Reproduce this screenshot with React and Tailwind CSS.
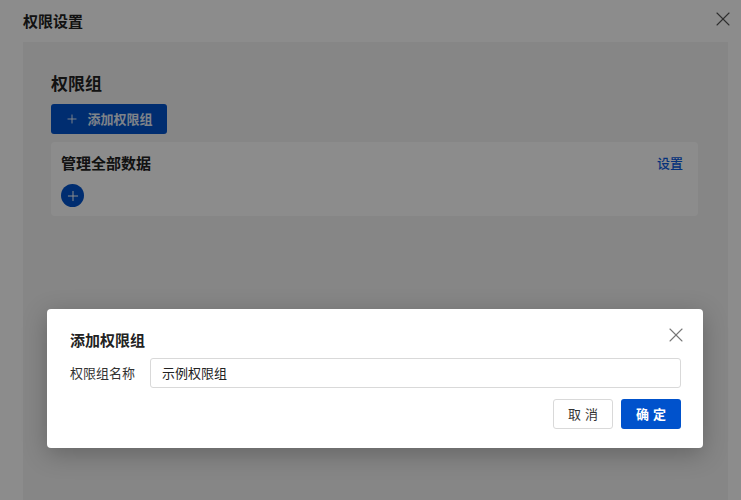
import { Plus, X } from "lucide-react";

const font = { fontFamily: '"Noto Sans CJK SC", "Noto Sans", sans-serif' };

export default function App() {
  return (
    <div style={font} className="relative w-[741px] h-[500px] overflow-hidden bg-white text-[#222]">
      {/* Page header */}
      <div className="h-[42px] flex items-center justify-between pl-[23px] pr-[6px]">
        <h1 className="text-[15px] font-bold leading-none -mt-[2px]">权限设置</h1>
        <X size={24} strokeWidth={1.1} className="text-[#555] -mt-[4px]" />
      </div>

      {/* Panel */}
      <div className="ml-[23px] w-[705px] h-[458px] bg-[#f5f5f5] pt-[33px] pl-[28px] pr-[30px]">
        <h2 className="text-[17px] font-bold leading-none mb-[13px] -mt-[1px]">权限组</h2>
        <button className="h-[30px] w-[116px] bg-[#0052cc] rounded-[3px] flex items-center justify-center gap-[8px] text-white text-[13px] font-bold">
          <Plus size={14} strokeWidth={1.5} />
          <span className="opacity-90">添加权限组</span>
        </button>
        <div className="mt-[8px] h-[74px] bg-white rounded-[4px] px-[10px] pt-[11px]">
          <div className="flex justify-between items-center">
            <span className="text-[15px] font-bold leading-[20px]">管理全部数据</span>
            <span className="text-[13px] font-medium text-[#0a5ae0] leading-[20px] mr-[5px]">设置</span>
          </div>
          <div className="mt-[11px] w-[23px] h-[23px] rounded-full bg-[#0052cc] flex items-center justify-center">
            <Plus size={16} strokeWidth={1.5} className="text-white" />
          </div>
        </div>
      </div>

      {/* Overlay */}
      <div className="absolute inset-0 bg-black/45" />

      {/* Modal */}
      <div className="absolute left-[47px] top-[309px] w-[656px] h-[139px] bg-white rounded-[4px] shadow-[0_6px_24px_rgba(0,0,0,0.25)] pl-[23px] pr-[22px] pt-[20px]">
        <div className="flex justify-between items-center h-[20px]">
          <h3 className="text-[15px] font-bold leading-none">添加权限组</h3>
          <X size={24} strokeWidth={1.1} className="text-[#777] -mr-[7px] -mt-[8px]" />
        </div>
        <div className="flex items-center mt-[9px]">
          <label className="w-[80px] text-[13px] text-[#333]">权限组名称</label>
          <div className="flex-1 h-[30px] border border-[#d9d9d9] rounded-[3px] flex items-center px-[11px] text-[13px] text-[#222]">
            示例权限组
          </div>
        </div>
        <div className="flex justify-end gap-[8px] mt-[11px]">
          <button className="w-[60px] h-[30px] border border-[#d9d9d9] rounded-[3px] bg-white text-[13px] text-[#333] tracking-[4px] pl-[4px]">
            取消
          </button>
          <button className="w-[60px] h-[30px] rounded-[3px] bg-[#0052cc] text-[13px] font-bold text-white tracking-[4px] pl-[4px]">
            确定
          </button>
        </div>
      </div>
    </div>
  );
}
